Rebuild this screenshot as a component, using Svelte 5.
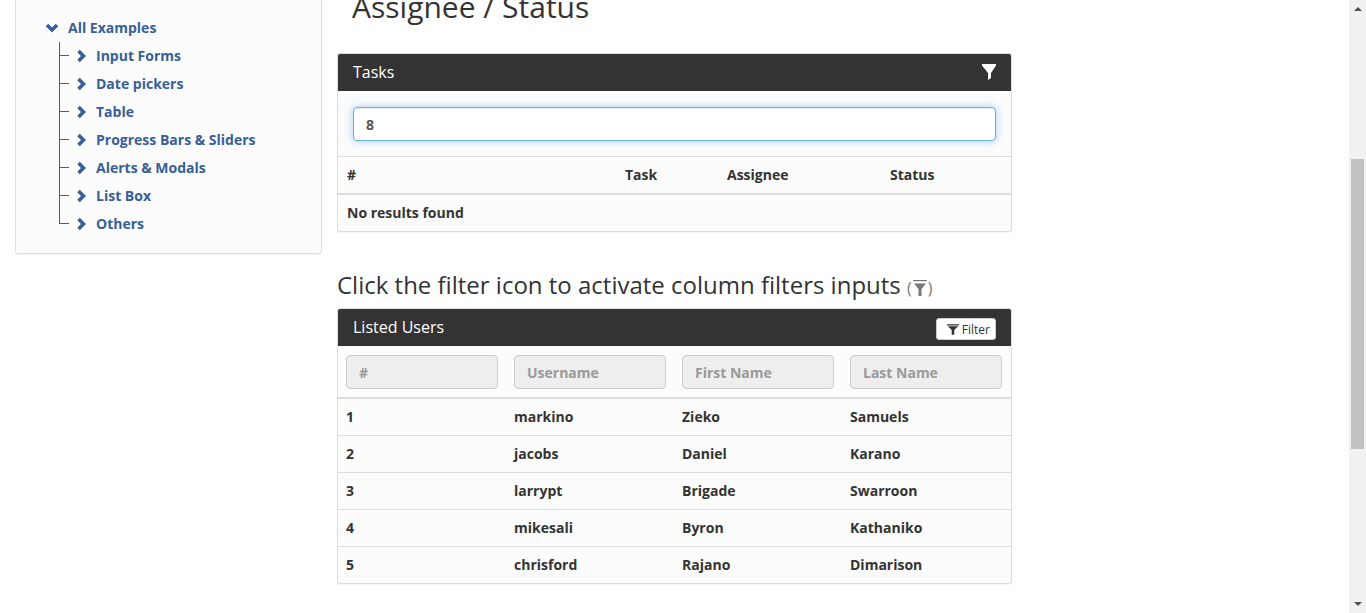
<script>
	const sideLinks = ['Input Forms', 'Date pickers', 'Table', 'Progress Bars & Sliders', 'Alerts & Modals', 'List Box', 'Others'];
	const users = [
		{ id: 1, username: 'markino', first: 'Zieko', last: 'Samuels' },
		{ id: 2, username: 'jacobs', first: 'Daniel', last: 'Karano' },
		{ id: 3, username: 'larrypt', first: 'Brigade', last: 'Swarroon' },
		{ id: 4, username: 'mikesali', first: 'Byron', last: 'Kathaniko' },
		{ id: 5, username: 'chrisford', first: 'Rajano', last: 'Dimarison' }
	];
	const filters = ['#', 'Username', 'First Name', 'Last Name'];
</script>

<div class="page">
	<div class="content">
		<aside class="sidebar">
			<div class="tree-root">
				<svg class="chev-down" viewBox="0 0 14 10"><path d="M2 2l5 5 5-5" /></svg>
				<span>All Examples</span>
			</div>
			<ul class="tree">
				{#each sideLinks as link}
					<li>
						<svg class="chev-right" viewBox="0 0 10 14"><path d="M2.5 2l5 5-5 5" /></svg>
						<span>{link}</span>
					</li>
				{/each}
			</ul>
		</aside>

		<main class="main">
			<h2 class="page-title">Assignee / Status</h2>

			<section class="panel">
				<header class="panel-head">
					<span>Tasks</span>
					<svg class="funnel-white" viewBox="0 0 14 16"><path d="M0 0h14v1.5L9 9v5l-3 2V9L0 1.5z" /></svg>
				</header>
				<div class="search-row">
					<input class="search" type="text" value="8" />
				</div>
				<table class="tasks">
					<thead>
						<tr>
							<th class="c-id">#</th>
							<th class="c-task">Task</th>
							<th class="c-assignee">Assignee</th>
							<th>Status</th>
						</tr>
					</thead>
					<tbody>
						<tr><td colspan="4">No results found</td></tr>
					</tbody>
				</table>
			</section>

			<h4 class="hint">
				Click the filter icon to activate column filters inputs
				<small>(<svg class="funnel-grey" viewBox="0 0 14 16"><path d="M1 3.5h12L8.5 9v7h-3V9z" /><rect x="0" y="0" width="14" height="1.2" /></svg>)</small>
			</h4>

			<section class="panel">
				<header class="panel-head users-head">
					<span>Listed Users</span>
					<button class="filter-btn" type="button">
						<svg viewBox="0 0 14 12"><path d="M0 0h14v1.2H0zM1 2.2h12L8.5 6.5V12h-3V6.5z" /></svg>
						Filter
					</button>
				</header>
				<table class="users">
					<thead>
						<tr>
							{#each filters as name}
								<th><input type="text" placeholder={name} disabled /></th>
							{/each}
						</tr>
					</thead>
					<tbody>
						{#each users as user}
							<tr>
								<td>{user.id}</td>
								<td>{user.username}</td>
								<td>{user.first}</td>
								<td>{user.last}</td>
							</tr>
						{/each}
					</tbody>
				</table>
			</section>
		</main>
	</div>

	<div class="scrollbar">
		<span class="arrow-up"></span>
		<div class="thumb"></div>
		<span class="arrow-down"></span>
	</div>
</div>

<style>
	:global(body) {
		margin: 0;
		background: #fff;
		overflow: hidden;
	}

	.page {
		display: flex;
		height: 613px;
		overflow: hidden;
		font-family: "Open Sans", sans-serif;
		color: #333;
	}

	.content {
		flex: 1;
		display: flex;
		align-items: flex-start;
		padding-left: 15px;
		min-width: 0;
	}

	.scrollbar {
		display: flex;
		flex-direction: column;
		align-items: center;
		width: 17px;
		background: #f1f1f1;
		flex-shrink: 0;
	}

	.arrow-up,
	.arrow-down {
		width: 0;
		height: 0;
		border-left: 4px solid transparent;
		border-right: 4px solid transparent;
	}

	.arrow-up {
		margin-top: 7px;
		border-bottom: 4px solid #505050;
	}

	.arrow-down {
		margin-top: auto;
		margin-bottom: 7px;
		border-top: 4px solid #505050;
	}

	.thumb {
		width: 13px;
		height: 290px;
		margin-top: 148px;
		background: #c1c1c1;
	}

	.sidebar {
		width: 307px;
		height: 270px;
		box-sizing: border-box;
		margin-top: -16px;
		padding: 29px 0 0 29px;
		background: #fcfcfc;
		border: 1px solid #ddd;
		border-radius: 3px;
		box-shadow: 0 1px 1px rgba(0, 0, 0, 0.05);
		font-size: 14px;
		font-weight: 700;
		color: #376096;
		flex-shrink: 0;
	}

	.tree-root {
		display: flex;
		align-items: center;
		height: 28px;
		line-height: 28px;
	}

	.chev-down {
		width: 14px;
		height: 10px;
		margin-right: 9px;
		fill: none;
		stroke: #376096;
		stroke-width: 3.6;
	}

	.tree {
		list-style: none;
		margin: 0 0 0 14px;
		padding: 0;
	}

	.tree li {
		position: relative;
		display: flex;
		align-items: center;
		height: 28px;
		line-height: 28px;
		padding-left: 17px;
	}

	.tree li::before {
		content: "";
		position: absolute;
		left: 0;
		top: 0;
		bottom: 0;
		border-left: 1px solid #376096;
	}

	.tree li:last-child::before {
		bottom: 14px;
	}

	.tree li::after {
		content: "";
		position: absolute;
		left: 0;
		top: 13px;
		width: 10px;
		border-top: 1px solid #376096;
	}

	.chev-right {
		width: 10px;
		height: 14px;
		margin-right: 10px;
		fill: none;
		stroke: #376096;
		stroke-width: 3.6;
	}

	.main {
		width: 675px;
		margin-left: 15px;
		flex-shrink: 0;
	}

	.page-title {
		margin: -13px 0 0 15px;
		height: 66px;
		font-size: 30px;
		font-weight: 400;
		line-height: 40px;
	}

	.panel {
		background: #fcfcfc;
		border: 1px solid #ddd;
		border-radius: 3px;
		box-shadow: 0 1px 1px rgba(0, 0, 0, 0.05);
		overflow: hidden;
	}

	.panel-head {
		display: flex;
		align-items: center;
		justify-content: space-between;
		height: 38px;
		padding: 0 16px;
		background: #333;
		color: #fff;
		font-size: 16px;
		margin: -1px -1px 0;
	}

	.funnel-white {
		width: 14px;
		height: 16px;
		fill: #fff;
	}

	.search-row {
		padding: 16px 15px 15px;
		border-bottom: 1px solid #ddd;
	}

	.search {
		display: block;
		width: 100%;
		height: 34px;
		box-sizing: border-box;
		padding: 6px 12px;
		background: #fff;
		border: 1px solid #66afe9;
		border-radius: 4px;
		box-shadow: inset 0 1px 1px rgba(0, 0, 0, 0.075), 0 0 8px rgba(102, 175, 233, 0.6);
		font: 700 14px "Open Sans", sans-serif;
		color: #555;
		outline: none;
	}

	table {
		width: 100%;
		border-collapse: collapse;
		table-layout: fixed;
		font-size: 14px;
	}

	th {
		text-align: left;
		padding: 8px;
		line-height: 20px;
		border-bottom: 2px solid #ddd;
	}

	td {
		padding: 8px;
		line-height: 20px;
		font-weight: 700;
	}

	.c-id {
		width: 262px;
	}

	.c-task {
		width: 86px;
	}

	.c-assignee {
		width: 147px;
	}

	.tasks th:first-child,
	.tasks td {
		padding-left: 9px;
	}

	.hint {
		margin: 38px 0 9px;
		height: 29px;
		font-size: 24px;
		font-weight: 400;
		line-height: 29px;
		white-space: nowrap;
	}

	.hint small {
		font-size: 16px;
		color: #777;
	}

	.funnel-grey {
		display: inline-block;
		width: 14px;
		height: 16px;
		vertical-align: -2px;
		margin: 0 1px;
		fill: #777;
	}

	.filter-btn {
		display: flex;
		align-items: center;
		gap: 3px;
		height: 22px;
		padding: 0 5px 0 10px;
		margin-top: 4px;
		background: #fff;
		border: 1px solid #ccc;
		border-radius: 3px;
		font: 400 12px "Open Sans", sans-serif;
		color: #333;
	}

	.filter-btn svg {
		width: 12px;
		height: 11px;
		fill: #333;
	}

	.users th {
		padding: 9px 8px 8px;
		width: 168px;
		box-sizing: border-box;
	}

	.users th:last-child {
		width: auto;
		padding-right: 9px;
	}

	.users input {
		display: block;
		width: 100%;
		height: 34px;
		box-sizing: border-box;
		padding: 6px 12px;
		background: #eee;
		border: 1px solid #ccc;
		border-radius: 4px;
		font: 700 14px "Open Sans", sans-serif;
	}

	.users input::placeholder {
		color: #999;
		opacity: 1;
	}

	.users td {
		border-top: 1px solid #ddd;
	}

	.users tbody tr:first-child td {
		border-top: 0;
	}
</style>
